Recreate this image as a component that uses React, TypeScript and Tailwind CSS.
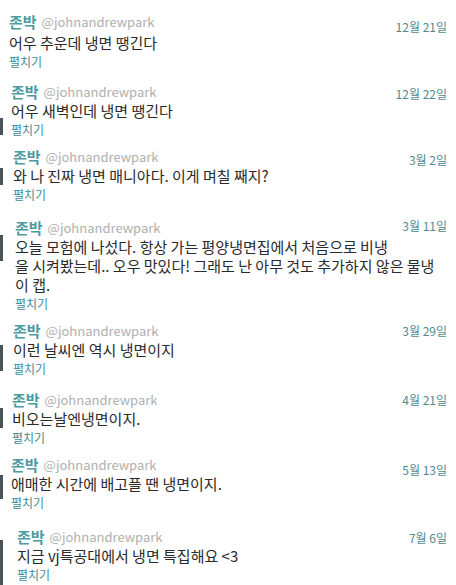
import React from 'react'

type Tweet = {
  date: string
  lines: string[]
  h: string
  pl: string
  textMt: string
  dateShift: string
  sliverTop: string
  sliverH: string
}

const tweets: Tweet[] = [
  { date: '12월 21일', lines: ['어우 추운데 냉면 땡긴다'], h: 'h-[70px]', pl: 'pl-[6px]', textMt: 'mt-[2px]', dateShift: 'translate-y-[5px]', sliverTop: 'mt-[0px]', sliverH: 'h-[0px]' },
  { date: '12월 22일', lines: ['어우 새벽인데 냉면 땡긴다'], h: 'h-[65px]', pl: 'pl-[8px]', textMt: 'mt-[0px]', dateShift: 'translate-y-[2px]', sliverTop: 'mt-[48px]', sliverH: 'h-[17px]' },
  { date: '3월 2일', lines: ['와 나 진짜 냉면 매니아다. 이게 며칠 째지?'], h: 'h-[71px]', pl: 'pl-[10px]', textMt: 'mt-[0px]', dateShift: 'translate-y-[3px]', sliverTop: 'mt-[33px]', sliverH: 'h-[17px]' },
  { date: '3월 11일', lines: ['오늘 모험에 나섰다. 항상 가는 평양냉면집에서 처음으로 비냉', '을 시켜봤는데.. 오우 맛있다! 그래도 난 아무 것도 추가하지 않은 물냉', '이 캡.'], h: 'h-[103px]', pl: 'pl-[12px]', textMt: 'mt-[0px]', dateShift: '-translate-y-[2px]', sliverTop: 'mt-[29px]', sliverH: 'h-[26px]' },
  { date: '3월 29일', lines: ['이런 날씨엔 역시 냉면이지'], h: 'h-[69px]', pl: 'pl-[10px]', textMt: 'mt-[0px]', dateShift: 'translate-y-[0px]', sliverTop: 'mt-[36px]', sliverH: 'h-[26px]' },
  { date: '4월 21일', lines: ['비오는날엔냉면이지.'], h: 'h-[65px]', pl: 'pl-[9px]', textMt: 'mt-[0px]', dateShift: 'translate-y-[0px]', sliverTop: 'mt-[30px]', sliverH: 'h-[20px]' },
  { date: '5월 13일', lines: ['애매한 시간에 배고플 땐 냉면이지.'], h: 'h-[72px]', pl: 'pl-[8px]', textMt: 'mt-[0px]', dateShift: 'translate-y-[5px]', sliverTop: 'mt-[32px]', sliverH: 'h-[24px]' },
  { date: '7월 6일', lines: ['지금 vj특공대에서 냉면 특집해요 <3'], h: 'h-[70px]', pl: 'pl-[14px]', textMt: 'mt-[0px]', dateShift: 'translate-y-[1px]', sliverTop: 'mt-[25px]', sliverH: 'h-[45px]' },
]

function TweetRow({ t }: { t: Tweet }) {
  return (
    <div className={`flex shrink-0 ${t.h}`}>
      <div className="w-[3px] shrink-0">
        <div className={`w-[3px] bg-[#4a5458] ${t.sliverTop} ${t.sliverH}`} />
      </div>
      <div className={`flex-1 flex flex-col pt-[12px] pr-[9px] ${t.pl}`}>
        <div className="flex h-[19px] shrink-0 items-center justify-between">
          <div className="flex items-center gap-[5px] h-[19px]">
            <span className="text-[15px] leading-[19px] font-bold text-[#4c9aa2]">존박</span>
            <span className="text-[13px] leading-[19px] text-[#b0b0b0]">@johnandrewpark</span>
          </div>
          <span className={`text-[12px] leading-[19px] text-[#4f8a92] ${t.dateShift}`}>{t.date}</span>
        </div>
        <div className={`flex flex-col shrink-0 ${t.textMt}`}>
          {t.lines.map((l, i) => (
            <div key={i} className="h-[19px] text-[15px] leading-[19px] text-[#2a2a2a] whitespace-nowrap">
              {l}
            </div>
          ))}
          <div className="h-[19px] text-[12px] leading-[19px] text-[#3f8d96]">펼치기</div>
        </div>
      </div>
    </div>
  )
}

export default function App() {
  return (
    <div
      className="w-[456px] h-[585px] flex flex-col bg-white overflow-hidden"
      style={{ fontFamily: '"Noto Sans CJK KR", "Noto Sans", sans-serif' }}
    >
      {tweets.map((t, i) => (
        <TweetRow key={i} t={t} />
      ))}
    </div>
  )
}
